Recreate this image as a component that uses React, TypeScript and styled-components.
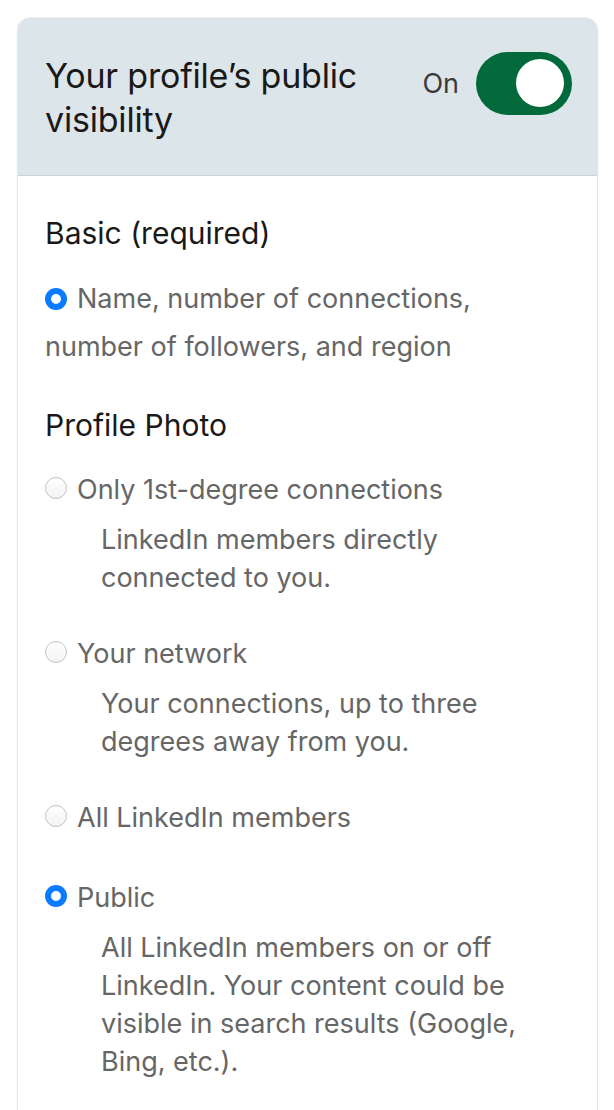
import React from "react";
import styled, { createGlobalStyle } from "styled-components";

const Global = createGlobalStyle`
  html, body { margin: 0; padding: 0; background: #ffffff; }
  body { font-family: Inter, "Noto Sans", "Liberation Sans", sans-serif; -webkit-font-smoothing: antialiased; }
  * { box-sizing: border-box; }
`;

const Card = styled.section`
  margin: 18px 17px 0 18px;
  width: 579px;
  border-radius: 12px 12px 0 0;
  overflow: hidden;
  box-shadow: 0 0 0 1px rgba(0, 0, 0, 0.06), 0 1px 3px rgba(0, 0, 0, 0.12);
  background: #ffffff;
`;

const Header = styled.header`
  height: 158px;
  background: #dce5e9;
  border-bottom: 1px solid #c9d3d8;
  display: flex;
  align-items: flex-start;
  justify-content: space-between;
  padding: 34px 25px 0 27px;
`;

const Title = styled.h1`
  margin: 2px 0 0 0;
  font-size: 34px;
  line-height: 44px;
  font-weight: 400;
  letter-spacing: -0.2px;
  color: #191919;
  max-width: 340px;
`;

const ToggleGroup = styled.div`
  display: flex;
  align-items: center;
  gap: 17px;
`;

const ToggleLabel = styled.span`
  font-size: 27px;
  color: #3b3b3b;
`;

const Switch = styled.span<{ $on: boolean }>`
  position: relative;
  display: block;
  width: 96px;
  height: 63px;
  border-radius: 32px;
  background: ${(p) => (p.$on ? "#02693b" : "#8c8c8c")};
`;

const Knob = styled.span<{ $on: boolean }>`
  position: absolute;
  top: 7px;
  left: ${(p) => (p.$on ? "40px" : "8px")};
  width: 48px;
  height: 48px;
  border-radius: 50%;
  background: #ffffff;
`;

const Body = styled.div`
  padding: 37px 27px 40px 27px;
`;

const Heading = styled.h2`
  margin: 0;
  font-size: 30px;
  line-height: 40px;
  font-weight: 400;
  color: #191919;
`;

const Radio = styled.span<{ $checked: boolean }>`
  display: inline-block;
  flex: none;
  width: 22px;
  height: 22px;
  border-radius: 50%;
  vertical-align: middle;
  margin: -4px 10px 0 0;
  ${(p) =>
    p.$checked
      ? `border: 6.5px solid #0a7aff; background: #ffffff;`
      : `border: 1px solid #c3c3c3; background: linear-gradient(#ffffff, #f3f3f3);`}
`;

const WrapLabel = styled.p`
  margin: 22px 0 34px 0;
  font-size: 27px;
  line-height: 48px;
  color: #666666;
`;

const Options = styled.div`
  display: flex;
  flex-direction: column;
  gap: 37px;
  margin-top: 25px;
`;

const Option = styled.div<{ $extra?: number }>`
  display: flex;
  flex-direction: column;
  gap: 11px;
  padding-bottom: ${(p) => p.$extra ?? 0}px;
`;

const OptionRow = styled.label`
  display: flex;
  align-items: center;
  font-size: 27px;
  line-height: 40px;
  color: #666666;
`;

const Description = styled.p`
  margin: 0 0 0 56px;
  font-size: 27px;
  line-height: 38px;
  color: #666666;
  white-space: nowrap;
`;

const options = [
  {
    label: "Only 1st-degree connections",
    desc: ["LinkedIn members directly", "connected to you."],
    checked: false,
  },
  {
    label: "Your network",
    desc: ["Your connections, up to three", "degrees away from you."],
    checked: false,
  },
  { label: "All LinkedIn members", desc: [], checked: false, extra: 3 },
  {
    label: "Public",
    desc: [
      "All LinkedIn members on or off",
      "LinkedIn. Your content could be",
      "visible in search results (Google,",
      "Bing, etc.).",
    ],
    checked: true,
  },
];

export default function App() {
  return (
    <>
      <Global />
      <Card>
        <Header>
          <Title>Your profile’s public visibility</Title>
          <ToggleGroup>
            <ToggleLabel>On</ToggleLabel>
            <Switch $on={true}>
              <Knob $on={true} />
            </Switch>
          </ToggleGroup>
        </Header>
        <Body>
          <Heading>Basic (required)</Heading>
          <WrapLabel>
            <Radio $checked={true} />
            Name, number of connections,
            <br />
            number of followers, and region
          </WrapLabel>
          <Heading>Profile Photo</Heading>
          <Options>
            {options.map((o) => (
              <Option key={o.label} $extra={o.extra}>
                <OptionRow>
                  <Radio $checked={o.checked} />
                  {o.label}
                </OptionRow>
                {o.desc.length > 0 && (
                  <Description>
                    {o.desc.map((line, i) => (
                      <React.Fragment key={i}>
                        {line}
                        {i < o.desc.length - 1 && <br />}
                      </React.Fragment>
                    ))}
                  </Description>
                )}
              </Option>
            ))}
          </Options>
        </Body>
      </Card>
    </>
  );
}
